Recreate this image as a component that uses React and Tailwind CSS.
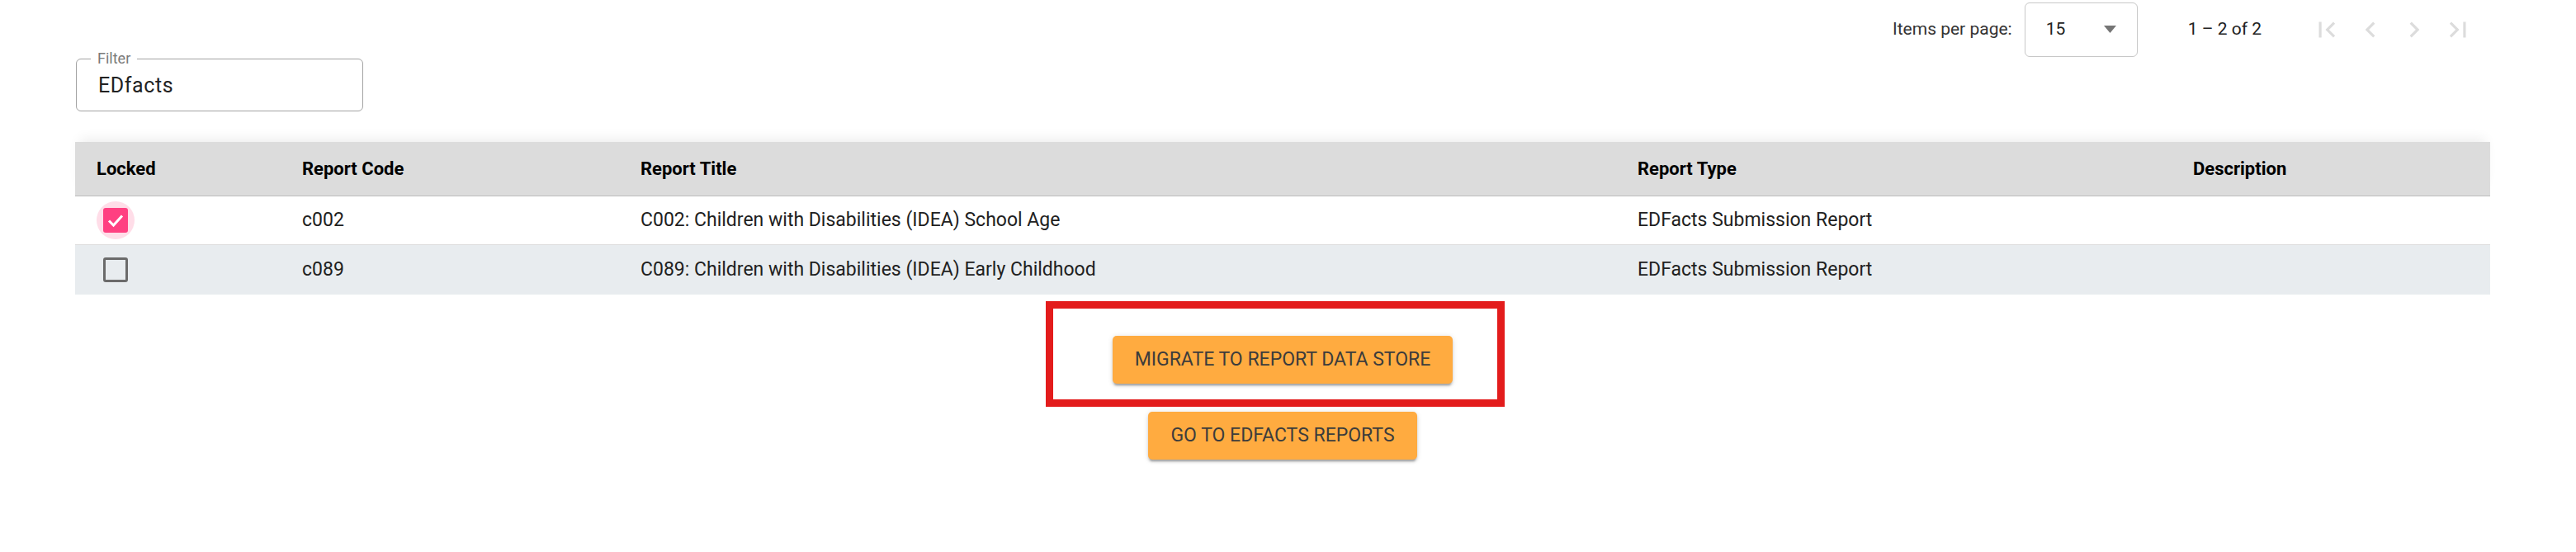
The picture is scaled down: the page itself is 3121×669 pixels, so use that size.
import React from 'react';

const rows = [
  { locked: true, code: 'c002', title: 'C002: Children with Disabilities (IDEA) School Age', type: 'EDFacts Submission Report', bg: 'h-[59px] bg-white border-b border-[#dedede]' },
  { locked: false, code: 'c089', title: 'C089: Children with Disabilities (IDEA) Early Childhood', type: 'EDFacts Submission Report', bg: 'h-[60px] bg-[#e8ecef]' },
];

const cols = 'grid grid-cols-[275px_410px_1208px_673px_1fr] items-center';

function PageIcon({ d }) {
  return (
    <button className="w-[53px] h-[53px] flex items-center justify-center">
      <svg viewBox="0 0 24 24" className="w-[38px] h-[38px]" fill="#dcdcdc">
        <path d={d} />
      </svg>
    </button>
  );
}

function Checkbox({ checked }) {
  if (!checked) {
    return <div className="w-[30px] h-[30px] border-[3px] border-[#6b6b6b] rounded-[3px]" />;
  }
  return (
    <div className="relative w-[30px] h-[30px]">
      <div className="absolute -inset-[8px] rounded-full bg-[#ffdde8]" />
      <div className="relative w-[30px] h-[30px] rounded-[3px] bg-[#ff4081] flex items-center justify-center">
        <svg viewBox="0 0 30 30" className="w-[30px] h-[30px]">
          <polyline points="7,15.5 12.5,21 23,9.5" fill="none" stroke="white" strokeWidth="3" />
        </svg>
      </div>
    </div>
  );
}

export default function App() {
  return (
    <div className="w-[3121px] h-[669px] bg-white font-['Roboto',sans-serif] overflow-hidden">
      {/* paginator */}
      <div className="flex items-center justify-end h-[71px] pr-[117px] text-[21px] text-[#333]">
        <span>Items per page:</span>
        <div className="ml-[15px] w-[137px] h-[66px] border border-[#c8c8c8] rounded-[6px] flex items-center justify-between pl-[25px] pr-[25px]">
          <span className="text-[#222]">15</span>
          <svg viewBox="0 0 15 9" className="w-[15px] h-[9px]">
            <polygon points="0,0 15,0 7.5,9" fill="#757575" />
          </svg>
        </div>
        <span className="ml-[61px] text-[#222]">1 – 2 of 2</span>
        <div className="ml-[52px] flex">
          <PageIcon d="M18.41 16.59L13.82 12l4.59-4.59L17 6l-6 6 6 6zM6 6h2v12H6z" />
          <PageIcon d="M15.41 7.41L14 6l-6 6 6 6 1.41-1.41L10.83 12z" />
          <PageIcon d="M10 6L8.59 7.41 13.17 12l-4.58 4.59L10 18l6-6z" />
          <PageIcon d="M5.59 7.41L10.18 12l-4.59 4.59L7 18l6-6-6-6zM16 6h2v12h-2z" />
        </div>
      </div>

      {/* filter */}
      <div className="ml-[92px] w-[348px] h-[64px] relative border border-[#a3a3a3] rounded-[6px] flex items-center pl-[26px]">
        <span className="absolute left-[17px] top-[-12px] px-[8px] bg-white text-[18px] leading-[22px] text-[#7a7a7a]">Filter</span>
        <span className="text-[25px] tracking-[0.6px] text-[#222] mt-[1px]">EDfacts</span>
      </div>

      {/* table */}
      <div className="ml-[91px] w-[2926px] mt-[37px]">
        <div className={`${cols} h-[66px] bg-[#dcdcdc] border-b border-[#bcbcbc] text-[22px] font-bold text-black shadow-[0_-10px_14px_-6px_rgba(0,0,0,0.07)]`}>
          <div className="pl-[26px]">Locked</div>
          <div>Report Code</div>
          <div>Report Title</div>
          <div>Report Type</div>
          <div>Description</div>
        </div>
        {rows.map((r) => (
          <div key={r.code} className={`${cols} text-[23px] text-[#212121] ${r.bg}`}>
            <div className="pl-[34px]">
              <Checkbox checked={r.locked} />
            </div>
            <div>{r.code}</div>
            <div>{r.title}</div>
            <div>{r.type}</div>
            <div></div>
          </div>
        ))}

        {/* actions */}
        <div className="flex flex-col items-center">
          <div className="relative mt-[50px]">
            <div className="absolute left-[-81px] right-[-63px] top-[-42px] bottom-[-28px] border-[9px] border-[#e31c1c]" />
            <button className="relative h-[58px] px-[27px] bg-[#ffab40] rounded-[5px] text-[23px] text-[#3c3c3c] shadow-[0_4px_2px_-2px_rgba(0,0,0,0.2),0_3px_3px_0_rgba(0,0,0,0.14),0_1px_7px_0_rgba(0,0,0,0.12)]">
              MIGRATE TO REPORT DATA STORE
            </button>
          </div>
          <button className="mt-[34px] h-[58px] px-[27px] bg-[#ffab40] rounded-[5px] text-[23px] text-[#3c3c3c] shadow-[0_4px_2px_-2px_rgba(0,0,0,0.2),0_3px_3px_0_rgba(0,0,0,0.14),0_1px_7px_0_rgba(0,0,0,0.12)]">
            GO TO EDFACTS REPORTS
          </button>
        </div>
      </div>
    </div>
  );
}
